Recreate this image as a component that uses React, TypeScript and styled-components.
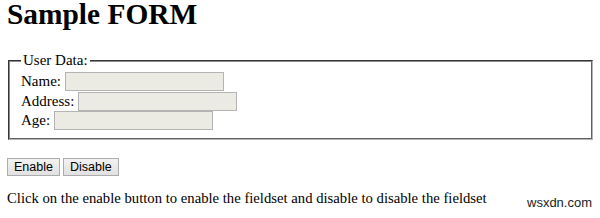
import React, { useState } from "react";
import styled, { createGlobalStyle } from "styled-components";

const GlobalStyle = createGlobalStyle`
  html, body {
    margin: 0;
    padding: 0;
    background: #ffffff;
  }
  body {
    font-family: "Liberation Serif", "Times New Roman", serif;
    font-size: 15px;
    color: #000000;
  }
`;

const Page = styled.div`
  position: relative;
  width: 600px;
  height: 218px;
  padding: 0 7px 0 8px;
  box-sizing: border-box;
  overflow: hidden;
`;

const Title = styled.h1`
  margin: 0 0 23px -1px;
  font-size: 29.4px;
  line-height: 29px;
  font-weight: bold;
`;

const Fieldset = styled.fieldset`
  margin: 0;
  padding: 3px 11px 8px 11px;
  border: 2px groove #b5b5b5;
  border-top-color: #8a8a8a;
  border-left-color: #8a8a8a;
  display: flex;
  flex-direction: column;
  gap: 0.5px;
  min-width: 0;
`;

const Legend = styled.legend`
  padding: 0 2px;
  margin-left: 0;
  font-size: 15px;
  line-height: 17px;
`;

const Row = styled.div`
  display: flex;
  align-items: center;
  gap: 4px;
  height: 19px;
  font-size: 15px;
`;

const Input = styled.input`
  width: 159px;
  height: 19px;
  box-sizing: border-box;
  padding: 1px 2px;
  border: 1px solid #b4b4b4;
  background: #ebebe4;
  font-family: "Liberation Sans", Arial, sans-serif;
  font-size: 13px;
  &:enabled {
    background: #ffffff;
  }
`;

const ButtonRow = styled.div`
  display: flex;
  gap: 3px;
  margin-top: 18px;
  margin-left: -1px;
`;

const Button = styled.button`
  height: 18px;
  padding: 0 6px;
  box-sizing: border-box;
  border: 1px solid #acacac;
  border-radius: 0;
  background: linear-gradient(#f2f2f2, #e1e1e1);
  font-family: "Liberation Sans", Arial, sans-serif;
  font-size: 12.5px;
  line-height: 16px;
  color: #000;
  cursor: pointer;
`;

const Note = styled.p`
  margin: 14px 0 0 -1px;
  font-size: 14.7px;
  line-height: 17px;
`;

const Watermark = styled.span`
  position: absolute;
  left: 527px;
  top: 195px;
  font-family: "Liberation Sans", Arial, sans-serif;
  font-size: 13px;
  color: #222;
`;

export default function App() {
  const [disabled, setDisabled] = useState(true);
  return (
    <>
      <GlobalStyle />
      <Page>
        <Title>Sample FORM</Title>
        <Fieldset disabled={disabled}>
          <Legend>User Data:</Legend>
          <Row>
            Name: <Input type="text" />
          </Row>
          <Row>
            Address: <Input type="text" />
          </Row>
          <Row>
            Age: <Input type="text" />
          </Row>
        </Fieldset>
        <ButtonRow>
          <Button onClick={() => setDisabled(false)}>Enable</Button>
          <Button onClick={() => setDisabled(true)}>Disable</Button>
        </ButtonRow>
        <Note>
          Click on the enable button to enable the fieldset and disable to
          disable the fieldset
        </Note>
        <Watermark>wsxdn.com</Watermark>
      </Page>
    </>
  );
}
